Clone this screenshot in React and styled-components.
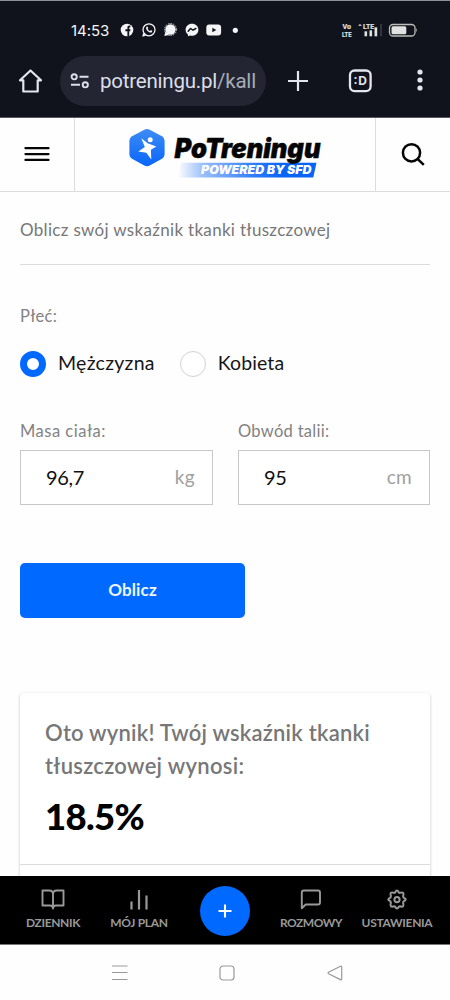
import styled, { createGlobalStyle } from 'styled-components';

const GlobalStyle = createGlobalStyle`
    * {
        box-sizing: border-box;
    }

    body {
        margin: 0;
        background: #fefefe;
        font-family: Lato, "Liberation Sans", sans-serif;
    }

    svg {
        display: block;
        flex: none;
        overflow: visible;
    }
`

const Screen = styled.div`
    width: 450px;
    height: 1000px;
    display: flex;
    flex-direction: column;
    overflow: hidden;
`

const BrowserTop = styled.div`
    height: 118px;
    flex: none;
    background: #10131b;
    border-top: 1px solid #8c9198;
    border-bottom: 1px solid #55585e;
    color: #e3e5f0;
    font-family: Inter, Roboto, sans-serif;
`

const StatusBar = styled.div`
    height: 55px;
    padding: 3px 32px 0 71px;
    display: flex;
    align-items: center;
    color: #f4f5f7;
`

const Clock = styled.span`
    width: 49px;
    font-size: 15px;
    letter-spacing: -0.05px;
    white-space: nowrap;
`

const Notifications = styled.div`
    display: flex;
    align-items: center;
    flex: 1;
`

const Signals = styled.div`
    display: flex;
    align-items: center;
`

const AddressBar = styled.div`
    height: 50px;
    padding: 0 24px 0 18px;
    display: flex;
    align-items: center;
`

const AddressPill = styled.div`
    width: 206px;
    height: 50px;
    margin: 0 21px 0 17px;
    padding: 0 9px 0 10px;
    border-radius: 25px;
    background: #232632;
    display: flex;
    align-items: center;
    gap: 10px;
`

const Url = styled.span`
    font-family: Roboto, sans-serif;
    font-size: 20.5px;
    letter-spacing: -0.22px;
    color: #dcdfeb;
    white-space: nowrap;

    & span {
        color: #a9acb8;
    }
`

const BarActions = styled.div`
    flex: 1;
    display: flex;
    align-items: center;
    justify-content: space-between;
    padding-left: 40px;
`

const SiteHeader = styled.header`
    height: 74px;
    flex: none;
    display: flex;
    border-bottom: 1px solid #dcdcdc;
`

const HeaderCell = styled.div`
    width: ${props => props.$width || 'auto'};
    flex: ${props => props.$width ? 'none' : 1};
    display: flex;
    align-items: center;
    justify-content: center;

    & + & {
        border-left: 1px solid #dcdcdc;
    }
`

const Content = styled.main`
    flex: 1;
    min-height: 0;
    overflow: hidden;
    padding: 0 20px;
`

const Intro = styled.h1`
    height: 73px;
    margin: 0 0 40px;
    border-bottom: 1px solid #dcdcdc;
    font-size: 17px;
    line-height: 76px;
    font-weight: 400;
    letter-spacing: 0.31px;
    color: #777;
    white-space: nowrap;
`

const Label = styled.div`
    height: 22px;
    font-size: 16.5px;
    line-height: 22px;
    letter-spacing: ${props => props.$spacing || '0.3px'};
    color: #828282;
    white-space: nowrap;
`

const RadioGroup = styled.div`
    display: flex;
    gap: 25px;
    margin: 24px 0 43px;
`

const RadioOption = styled.div`
    display: flex;
    align-items: center;
    height: 26px;
    gap: 12px;
    font-size: 19.5px;
    line-height: 26px;
    letter-spacing: ${props => props.$spacing};
    color: #161616;
    white-space: nowrap;
`

const RadioText = styled.span`
    padding-bottom: 2px;
`

const Radio = styled.span`
    width: 26px;
    height: 26px;
    border-radius: 50%;
    background: #fff;
    border: ${props => props.$checked ? '7px solid #0069ff' : '1.5px solid #d2d2d2'};
`

const Fields = styled.div`
    display: grid;
    grid-template-columns: 193px 192px;
    gap: 25px;
`

const Input = styled.div`
    height: 55px;
    margin-top: 8px;
    padding: 0 17px 2px 25px;
    border: 1px solid #c8c8c8;
    background: #fff;
    display: flex;
    align-items: center;
    justify-content: space-between;
    font-size: 20px;
    letter-spacing: -0.3px;
    color: #111;
`

const Unit = styled.span`
    font-size: 19px;
    letter-spacing: 0.3px;
    color: #a0a0a0;
`

const SubmitButton = styled.button`
    display: block;
    width: 225px;
    height: 55px;
    margin: 58px 0 75px;
    padding: 0 0 2px;
    border: 0;
    border-radius: 5px;
    background: #0069ff;
    color: #edf5ff;
    font-family: inherit;
    font-size: 17px;
    font-weight: 700;
    letter-spacing: 0.15px;
`

const ResultCard = styled.section`
    height: 220px;
    border-radius: 4px;
    background: #fff;
    box-shadow: 0 1px 3px rgba(0, 0, 0, 0.25);
`

const Result = styled.div`
    height: 172px;
    padding: 24px 25px 0;
    border-bottom: 1px solid #dcdcdc;
`

const ResultTitle = styled.h2`
    margin: 0;
    font-size: 22px;
    line-height: 32.5px;
    font-weight: 600;
    color: #777;
    white-space: nowrap;
`

const ResultLine = styled.span`
    display: block;
    letter-spacing: ${props => props.$spacing};
`

const ResultValue = styled.div`
    margin-top: 12px;
    font-size: 36.5px;
    line-height: 44px;
    font-weight: 900;
    letter-spacing: -0.7px;
    color: #000;
`

const AppNav = styled.nav`
    height: 69px;
    flex: none;
    background: #000;
    border-bottom: 1px solid #777;
    display: grid;
    grid-template-columns: repeat(5, 86px);
    padding-left: 10px;
`

const NavItem = styled.div`
    padding-top: 12px;
    display: flex;
    flex-direction: column;
    align-items: center;
    color: #999;
    font-size: 12px;
    line-height: 16px;
    font-weight: 700;
    letter-spacing: ${props => props.$spacing || '-0.3px'};
    white-space: nowrap;

    & svg {
        margin-bottom: 4px;
    }
`

const AddButton = styled.div`
    width: 50px;
    height: 50px;
    margin: 10px auto 0;
    border-radius: 50%;
    background: #0069ff;
    display: flex;
    align-items: center;
    justify-content: center;
`

const SystemNav = styled.div`
    height: 55px;
    flex: none;
    padding-left: 4px;
    display: flex;
    align-items: center;
    justify-content: center;
    gap: 91.5px;
`

const NotificationIcons = () => (
    <svg width="130" height="16" viewBox="0 0 130 16" fill="#f4f5f7">
        <circle cx="7" cy="8" r="6.3" />
        <path d="M7.4 14.8V9.2H5.4V7.2h2V5.8c0-1.7.9-2.5 3-2.2v1.7c-1 0-1.2.2-1.2.9v1h1.3l-.3 2h-1v5.4z" fill="#10131b" />
        <circle cx="29" cy="7.8" r="6" fill="none" stroke="#f4f5f7" strokeWidth="1.3" />
        <path d="M22.2 14.8l1-4.1 2.7 3z" />
        <path d="M26.4 5c.7-1 1.4-.5 1.7.7.2.6-.5.9-.4 1.3.5 1 1.2 1.6 2.1 2 .5.1.8-.9 1.3-.7 1.1.5 1.5.8.9 1.6-1 1.4-3.2.4-4.5-.9C26.3 7.8 25.7 6.2 26.4 5z" />
        <circle cx="50.5" cy="7.5" r="5.2" />
        <circle cx="50.5" cy="7.5" r="6" fill="none" stroke="#f4f5f7" strokeWidth=".8" strokeDasharray="1.5 1" />
        <path d="M44.3 14l1.2-4.5 3.5 3.5z" />
        <path d="M72 1.7c3.7 0 6.4 2.6 6.4 6s-2.7 6-6.4 6c-.8 0-1.4-.1-2-.3l-2 .9-.1-1.9c-1.4-1.1-2.3-2.7-2.3-4.7 0-3.4 2.7-6 6.4-6z" />
        <path d="M68.2 9.2l2.3-2.7 2.5 1.7 2.8-1.7" fill="none" stroke="#10131b" strokeWidth="1.5" strokeLinejoin="round" strokeLinecap="round" />
        <rect x="86.3" y="2.5" width="14.8" height="11" rx="3" />
        <path d="M92.3 5.7L96.3 8l-4 2.3z" fill="#10131b" />
        <circle cx="115.3" cy="8.3" r="2.6" />
    </svg>
)

const SignalIcons = () => (
    <svg width="76" height="16" viewBox="0 0 76 16" fill="#dfe2e0">
        <g fontFamily="Roboto, sans-serif" fontWeight="700" stroke="#dfe2e0" strokeWidth="0.2">
            <text x="0.5" y="7" fontSize="7.3" textLength="8.5" lengthAdjust="spacingAndGlyphs">Vo</text>
            <text x="0" y="14.5" fontSize="7.3" textLength="9.5" lengthAdjust="spacingAndGlyphs">LTE</text>
            <text x="21" y="7" fontSize="7.3" textLength="11" lengthAdjust="spacingAndGlyphs">LTE</text>
        </g>
        <path d="M16 3.8l2-1.8 2 1.8z" />
        <rect x="22.5" y="9.3" width="2.6" height="5" />
        <rect x="27.5" y="8.3" width="2.6" height="6" />
        <rect x="32.5" y="5.3" width="2.7" height="9" />
        <rect x="38" y="2" width="2" height="12.3" fill="#30343b" />
        <rect x="47.5" y="2.5" width="25.5" height="11.5" rx="3.5" fill="none" stroke="#b9beba" strokeWidth="1.3" />
        <rect x="49.5" y="4.3" width="14.8" height="8" rx="1.5" />
        <path d="M74 6q1.6 2.2 0 4.5z" />
    </svg>
)

const HomeIcon = () => (
    <svg width="25" height="24" viewBox="0 0 25 24" fill="none" stroke="#e3e5f0" strokeWidth="2.2" strokeLinejoin="round">
        <path d="M12.5 1.5L2 11.3h3.3V22.5h14.4V11.3H23z" />
    </svg>
)

const SiteSettingsIcon = () => (
    <svg width="20" height="18" viewBox="0 0 20 18" fill="none" stroke="#dcdfeb" strokeWidth="1.9">
        <circle cx="4.2" cy="4.8" r="2.6" />
        <path d="M9.5 4.8h9M1 12.8h9" />
        <circle cx="15.3" cy="12.8" r="2.6" />
    </svg>
)

const Logo = () => (
    <svg width="198" height="54" viewBox="-2 0 198 54">
        <defs>
            <linearGradient id="badge" x1="0" y1="0" x2="0" y2="1">
                <stop offset="0" stopColor="#3d8bf5" />
                <stop offset="1" stopColor="#0866fa" />
            </linearGradient>
            <linearGradient id="ribbon" x1="0" y1="0" x2="1" y2="0">
                <stop offset="0" stopColor="#0b65f4" stopOpacity="0" />
                <stop offset="0.18" stopColor="#0b65f4" stopOpacity="0.4" />
                <stop offset="0.55" stopColor="#0b65f4" stopOpacity="0.85" />
                <stop offset="0.75" stopColor="#0b65f4" />
            </linearGradient>
        </defs>
        <path d="M16.3 1.7Q19 .4 21.7 1.7L34 8.3Q36.6 10 36.6 12.8V26.3Q36.6 29.2 34 30.7L21.7 37.5Q19 38.9 16.3 37.5L4 30.7Q1.4 29.2 1.4 26.3V12.8Q1.4 10 4 8.3z" fill="url(#badge)" />
        <circle cx="22.2" cy="11.8" r="2.5" fill="#fff" />
        <path d="M13.3 10.3L19.6 15.3 28.3 18.6 22.9 21.8 23.3 31.5 18.4 24.8 10.3 23.5 16.8 19z" fill="#fff" />
        <path d="M53 34.8H188.5L185.3 49.6H49.5z" fill="url(#ribbon)" />
        <g fontFamily="Inter, Lato, sans-serif" fontStyle="italic" fontWeight="900">
            <text x="46.5" y="29.8" fontSize="26.5" textLength="146" lengthAdjust="spacingAndGlyphs" fill="#050505" stroke="#050505" strokeWidth="0.5">PoTreningu</text>
            <text x="73" y="46.3" fontSize="12" textLength="110.5" lengthAdjust="spacingAndGlyphs" fill="#fff">POWERED BY SFD</text>
        </g>
    </svg>
)

const App = () => {
    return <Screen>
        <GlobalStyle />
        <BrowserTop>
            <StatusBar>
                <Clock>14:53</Clock>
                <Notifications>
                    <NotificationIcons />
                </Notifications>
                <Signals>
                    <SignalIcons />
                </Signals>
            </StatusBar>
            <AddressBar>
                <HomeIcon />
                <AddressPill>
                    <SiteSettingsIcon />
                    <Url>potreningu.pl<span>/kall</span></Url>
                </AddressPill>
                <svg width="22" height="22" viewBox="0 0 22 22" stroke="#e3e5f0" strokeWidth="2.2">
                    <path d="M11 1v20M1 11h20" />
                </svg>
                <BarActions>
                    <svg width="24" height="24" viewBox="0 0 24 24" fill="none" stroke="#e3e5f0" strokeWidth="2.3">
                        <rect x="1" y="1.5" width="20.6" height="20.6" rx="4.5" />
                        <text x="4.5" y="16" fontSize="12" fontWeight="700" textLength="13.5" fill="#e3e5f0" stroke="none">:D</text>
                    </svg>
                    <svg width="12" height="22" viewBox="0 0 12 22" fill="#e3e5f0">
                        <circle cx="6" cy="2" r="2.6" />
                        <circle cx="6" cy="10" r="2.6" />
                        <circle cx="6" cy="18" r="2.6" />
                    </svg>
                </BarActions>
            </AddressBar>
        </BrowserTop>

        <SiteHeader>
            <HeaderCell $width="74px">
                <svg width="26" height="16" viewBox="0 0 26 16" stroke="#050505" strokeWidth="2.3" strokeLinecap="round">
                    <path d="M1.5 1.2h23M1.5 7.100h23M1.500 12.900h23" />
                </svg>
            </HeaderCell>
            <HeaderCell>
                <Logo />
            </HeaderCell>
            <HeaderCell $width="75px">
                <svg width="24" height="24" viewBox="0 0 24 24" fill="none" stroke="#050505" strokeWidth="2.5">
                    <circle cx="10.5" cy="9.8" r="8.6" />
                    <path d="M16.5 15.800l6.300 6" />
                </svg>
            </HeaderCell>
        </SiteHeader>

        <Content>
            <Intro>Oblicz swój wskaźnik tkanki tłuszczowej</Intro>
            <Label>Płeć:</Label>
            <RadioGroup>
                <RadioOption $spacing="0.28px">
                    <Radio $checked />
                    <RadioText>Mężczyzna</RadioText>
                </RadioOption>
                <RadioOption $spacing="0.1px">
                    <Radio />
                    <RadioText>Kobieta</RadioText>
                </RadioOption>
            </RadioGroup>
            <Fields>
                <div>
                    <Label $spacing="0.5px">Masa ciała:</Label>
                    <Input>96,7<Unit>kg</Unit></Input>
                </div>
                <div>
                    <Label>Obwód talii:</Label>
                    <Input>95<Unit>cm</Unit></Input>
                </div>
            </Fields>
            <SubmitButton>Oblicz</SubmitButton>
            <ResultCard>
                <Result>
                    <ResultTitle>
                        <ResultLine $spacing="0.22px">Oto wynik! Twój wskaźnik tkanki</ResultLine>
                        <ResultLine $spacing="0.3px">tłuszczowej wynosi:</ResultLine>
                    </ResultTitle>
                    <ResultValue>18.5%</ResultValue>
                </Result>
            </ResultCard>
        </Content>

        <AppNav>
            <NavItem $spacing="-0.35px">
                <svg width="24" height="23" viewBox="0 0 24 23" fill="none" stroke="#999" strokeWidth="1.9" strokeLinejoin="round">
                    <path d="M12 19.5V6Q12 2.500 8.500 2.500H1.500V17.500H9Q12 17.500 12 20.500Q12 17.500 15 17.500H22.500V2.500H15.500Q12 2.500 12 6" />
                </svg>
                DZIENNIK
            </NavItem>
            <NavItem>
                <svg width="24" height="23" viewBox="0 0 24 23" stroke="#999" strokeWidth="2.2">
                    <path d="M4.500 13.500v8M12 2v19.500M19.500 7.500v14" />
                </svg>
                MÓJ PLAN
            </NavItem>
            <AddButton>
                <svg width="14" height="14" viewBox="0 0 14 14" stroke="#fff" strokeWidth="2.1">
                    <path d="M7 .5v13M.5 7h13" />
                </svg>
            </AddButton>
            <NavItem $spacing="-0.5px">
                <svg width="24" height="23" viewBox="0 0 24 23" fill="none" stroke="#999" strokeWidth="1.9" strokeLinejoin="round">
                    <path d="M2.800 20.300V4.500Q2.800 2.500 4.800 2.500H19Q21 2.500 21 4.500V14.500Q21 16.500 19 16.500H6.700z" />
                </svg>
                ROZMOWY
            </NavItem>
            <NavItem>
                <svg width="24" height="23" viewBox="0 0 24 23" fill="none" stroke="#999" strokeWidth="2" strokeLinejoin="round">
                    <path d="M10.200 4.500Q12 .700 13.800 4.500L14.700 4.900Q19.800 3.200 18.100 8.100L18.500 9.600Q23 11.600 18.500 13.400L18.100 14.800Q19.800 20 14.700 18.300L13.800 18.700Q12 22.500 10.200 18.700L9.300 18.300Q4.200 20 5.900 14.800L5.500 13.400Q1 11.600 5.500 9.600L5.900 8.100Q4.200 3.200 9.300 4.900z" />
                    <circle cx="12" cy="11.600" r="2.600" />
                </svg>
                USTAWIENIA
            </NavItem>
        </AppNav>

        <SystemNav>
            <svg width="16" height="16" viewBox="0 0 16 16" stroke="#999" strokeWidth="1.2">
                <path d="M0 1h15.500M0 7.500h15.500M0 14.500h15.500" />
            </svg>
            <svg width="16" height="16" viewBox="0 0 16 16" fill="none" stroke="#999" strokeWidth="1.2">
                <rect x="1" y="1" width="14" height="14" rx="3" />
            </svg>
            <svg width="16" height="16" viewBox="0 0 16 16" fill="none" stroke="#999" strokeWidth="1.2" strokeLinejoin="round">
                <path d="M1.500 7.300L13.500 1.200Q14.700 .8 14.700 2V14Q14.700 15.200 13.500 14.600L1.500 8.700Q.6 8 1.500 7.300z" />
            </svg>
        </SystemNav>
    </Screen>
}

export default App;
